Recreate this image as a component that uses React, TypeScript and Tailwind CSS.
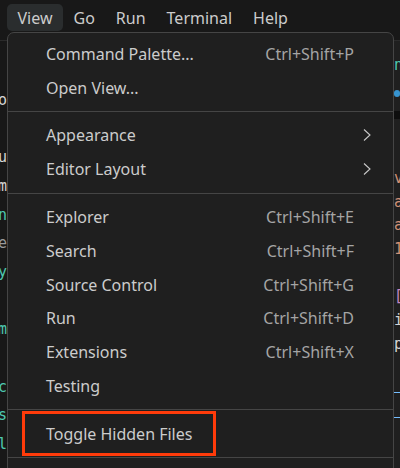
import React from 'react';

type Item = { label: string; keys?: string; sub?: boolean; marked?: boolean };

const groups: Item[][] = [
  [{ label: 'Command Palette...', keys: 'Ctrl+Shift+P' }, { label: 'Open View...' }],
  [{ label: 'Appearance', sub: true }, { label: 'Editor Layout', sub: true }],
  [
    { label: 'Explorer', keys: 'Ctrl+Shift+E' },
    { label: 'Search', keys: 'Ctrl+Shift+F' },
    { label: 'Source Control', keys: 'Ctrl+Shift+G' },
    { label: 'Run', keys: 'Ctrl+Shift+D' },
    { label: 'Extensions', keys: 'Ctrl+Shift+X' },
    { label: 'Testing' },
  ],
  [{ label: 'Toggle Hidden Files', marked: true }],
  [{ label: 'Word Wrap', keys: 'Alt+Z' }],
];

const menus = ['View', 'Go', 'Run', 'Terminal', 'Help'];

// bits of code peeking out on both sides of the open menu
const leftCode: [string, string][] = [
  ['', ''],
  ['o', 'text-[#d4d4d4]'],
  ['', ''],
  ['u', 'text-[#d4d4d4]'],
  ['m', 'text-[#d4d4d4]'],
  ['n', 'text-[#4ec9b0]'],
  ['e', 'text-[#9a9a9a]'],
  ['y', 'text-[#4ec9b0]'],
  ['', ''],
  ['m', 'text-[#4ec9b0]'],
  ['', ''],
  ['c', 'text-[#4ec9b0]'],
  ['s', 'text-[#4ec9b0]'],
  ['al', 'text-[#4ec9b0]'],
];

const rightCode: [string, string][] = [
  ['', ''],
  ['', ''],
  ['v', 'text-[#ce9178]'],
  ['a', 'text-[#ce9178]'],
  ['a', 'text-[#ce9178]'],
  ['1', 'text-[#ce9178]'],
  ['', ''],
  ['[', 'text-[#c586c0]'],
  ['i', 'text-[#d4d4d4]'],
  ['p', 'text-[#d4d4d4]'],
];

const Chevron = () => (
  <svg width="10" height="14" viewBox="0 0 10 14" fill="none" stroke="#c8c8c8" strokeWidth="1.1">
    <polyline points="2,1.5 8,7 2,12.5" />
  </svg>
);

const Row: React.FC<{ item: Item }> = ({ item }) => (
  <div className="relative flex h-[33.8px] items-center justify-between pl-[38px] pr-[39px]">
    <span className="text-[16px] text-[#cccccc]">{item.label}</span>
    {item.keys && <span className="text-[16px] text-[#a5a5a5]">{item.keys}</span>}
    {item.sub && (
      <span className="-mr-[18px] flex">
        <Chevron />
      </span>
    )}
    {item.marked && (
      <div className="absolute left-[14px] top-[-6px] h-[45px] w-[194px] border-[3px] border-[#ff3b0a]" />
    )}
  </div>
);

export default function App() {
  return (
    <div
      className="relative h-[468px] w-[400px] overflow-hidden bg-[#181818]"
      style={{ fontFamily: '"Noto Sans", "Liberation Sans", sans-serif' }}
    >
      {/* menu bar */}
      <div className="flex h-[41px] items-start border-b border-[#2b2b2b] pl-[7px] pt-[4px]">
        {menus.map((m, i) => (
          <div
            key={m}
            className={`flex h-[27px] items-center rounded-[5px] px-[10.5px] text-[16px] text-[#cccccc] ${i === 0 ? 'bg-[#2a2d2e]' : ''}`}
          >
            {m}
          </div>
        ))}
      </div>

      {/* editor behind the menu */}
      <div className="flex h-[427px]" style={{ fontFamily: '"DejaVu Sans Mono", monospace' }}>
        <div className="flex w-[7px] flex-col items-end overflow-hidden bg-[#181818] pt-[16px] text-[15px]">
          {leftCode.map(([t, c], i) => (
            <div key={i} className={`flex h-[28.7px] shrink-0 items-center ${c}`}>
              {t}
            </div>
          ))}
        </div>
        <div className="flex-1" />
        <div className="flex w-[7px] flex-col overflow-hidden border-l border-[#2b2b2b] bg-[#1f1f1f] pt-[14px] text-[15px]">
          <div className="flex h-[20px] shrink-0 items-center text-[#4ec9b0]">n</div>
          <div className="flex h-[36px] shrink-0 items-center">
            <span className="h-[7px] w-[7px] rounded-full bg-[#3794d0]" />
          </div>
          <div className="h-[8px] shrink-0 bg-[#0e0e0e]" />
          {rightCode.map(([t, c], i) => (
            <div key={i} className={`flex h-[23.7px] shrink-0 items-center ${c}`}>
              {t}
            </div>
          ))}
          <div className="mt-[36px] h-px shrink-0 bg-[#75beff]" />
          <div className="mt-[24px] h-px shrink-0 bg-[#75beff]" />
        </div>
      </div>

      {/* dropdown */}
      <div className="absolute left-[7px] top-[32px] w-[387px] rounded-t-[7px] border border-[#454545] bg-[#1f1f1f] pt-[4px]">
        {groups.map((g, gi) => (
          <div key={gi}>
            {gi > 0 && <div className="my-[6.5px] h-px bg-[#454545]" />}
            {g.map((item) => (
              <Row key={item.label} item={item} />
            ))}
          </div>
        ))}
      </div>
    </div>
  );
}
